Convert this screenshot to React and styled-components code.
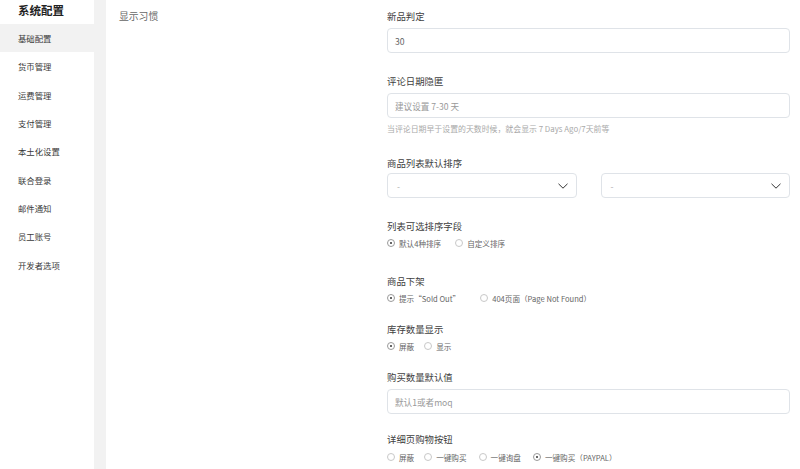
import React from "react";
import styled, { createGlobalStyle } from "styled-components";

const Global = createGlobalStyle`
  html, body { margin: 0; padding: 0; background: #f2f2f2; }
  body { font-family: "Noto Sans CJK SC", "Noto Sans", sans-serif; color: #333; }
  * { box-sizing: border-box; }
`;

const Page = styled.div`
  display: flex;
  width: 800px;
  height: 469px;
  overflow: hidden;
  background: #f2f2f2;
`;

const Sidebar = styled.nav`
  width: 94px;
  background: #fff;
  display: flex;
  flex-direction: column;
`;

const SideTitle = styled.div`
  height: 24px;
  padding: 2px 0 0 18px;
  line-height: 16px;
  font-size: 11.5px;
  font-weight: 700;
  color: #222;
`;

const SideItem = styled.div`
  height: 28.3px;
  display: flex;
  align-items: center;
  padding-left: 18px;
  font-size: 8.4px;
  color: #3a3a3a;
  background: ${(p) => (p.$active ? "#f2f2f2" : "#fff")};
`;

const Main = styled.main`
  margin-left: 12px;
  flex: 1;
  background: #fff;
  display: flex;
`;

const SectionTitle = styled.div`
  width: 281px;
  padding: 9px 0 0 13px;
  line-height: 14px;
  font-size: 9.8px;
  color: #666;
`;

const Form = styled.div`
  flex: 1;
  padding: 9px 10px 0 0;
  display: flex;
  flex-direction: column;
`;

const Field = styled.div`
  margin-top: ${(p) => p.$mt || 0}px;
  display: flex;
  flex-direction: column;
`;

const Label = styled.div`
  line-height: 14px;
  font-size: 9.4px;
  color: #404040;
  margin-bottom: ${(p) => p.$mb ?? 5}px;
`;

const Input = styled.div`
  height: 25px;
  border: 1px solid #dfe3e8;
  border-radius: 4px;
  display: flex;
  align-items: center;
  padding-left: 7px;
  font-size: 8.6px;
  color: ${(p) => (p.$value ? "#666" : "#999")};
`;

const Hint = styled.div`
  margin-top: 4px;
  line-height: 14px;
  font-size: 7.9px;
  color: #aaa;
`;

const SelectRow = styled.div`
  display: flex;
  gap: 24px;
`;

const Select = styled.div`
  flex: 1;
  height: 25px;
  border: 1px solid #dfe3e8;
  border-radius: 4px;
  display: flex;
  align-items: center;
  justify-content: space-between;
  padding: 0 8px 0 9px;
  font-size: 8.6px;
  color: #aaa;
`;

const RadioRow = styled.div`
  display: flex;
  align-items: center;
  height: 14px;
`;

const RadioOpt = styled.label`
  display: flex;
  align-items: center;
  gap: 4px;
  margin-right: ${(p) => p.$gap || 0}px;
  font-size: 7.6px;
  color: #666;
  white-space: nowrap;
`;

const Circle = styled.span`
  width: 8px;
  height: 8px;
  border-radius: 50%;
  border: 1px solid ${(p) => (p.$on ? "#9a9a9a" : "#c8c8c8")};
  display: inline-flex;
  align-items: center;
  justify-content: center;
  &::after {
    content: "";
    width: 2.6px;
    height: 2.6px;
    border-radius: 50%;
    background: ${(p) => (p.$on ? "#333" : "transparent")};
  }
`;

const Chevron = () => (
  <svg width="10" height="6" viewBox="0 0 10 6">
    <path d="M0.5 0.8 L5 5.2 L9.5 0.8" fill="none" stroke="#333" strokeWidth="1" />
  </svg>
);

const Radio = ({ on, gap, children }) => (
  <RadioOpt $gap={gap}>
    <Circle $on={on} />
    {children}
  </RadioOpt>
);

const menu = ["基础配置", "货币管理", "运费管理", "支付管理", "本土化设置", "联合登录", "邮件通知", "员工账号", "开发者选项"];

export default function App() {
  return (
    <>
      <Global />
      <Page>
        <Sidebar>
          <SideTitle>系统配置</SideTitle>
          {menu.map((m, i) => (
            <SideItem key={m} $active={i === 0}>{m}</SideItem>
          ))}
        </Sidebar>
        <Main>
          <SectionTitle>显示习惯</SectionTitle>
          <Form>
            <Field>
              <Label>新品判定</Label>
              <Input $value>30</Input>
            </Field>
            <Field $mt={21}>
              <Label>评论日期隐匿</Label>
              <Input>建议设置 7-30 天</Input>
              <Hint>当评论日期早于设置的天数时候，就会显示 7 Days Ago/7天前等</Hint>
            </Field>
            <Field $mt={20}>
              <Label $mb={3}>商品列表默认排序</Label>
              <SelectRow>
                <Select>- <Chevron /></Select>
                <Select>- <Chevron /></Select>
              </SelectRow>
            </Field>
            <Field $mt={21}>
              <Label $mb={3}>列表可选排序字段</Label>
              <RadioRow>
                <Radio on gap={14}>默认4种排序</Radio>
                <Radio>自定义排序</Radio>
              </RadioRow>
            </Field>
            <Field $mt={24}>
              <Label $mb={3}>商品下架</Label>
              <RadioRow>
                <Radio on gap={20}>提示“Sold Out”</Radio>
                <Radio>404页面（Page Not Found）</Radio>
              </RadioRow>
            </Field>
            <Field $mt={17}>
              <Label $mb={3}>库存数量显示</Label>
              <RadioRow>
                <Radio on gap={10}>屏蔽</Radio>
                <Radio>显示</Radio>
              </RadioRow>
            </Field>
            <Field $mt={17}>
              <Label>购买数量默认值</Label>
              <Input>默认1或者moq</Input>
            </Field>
            <Field $mt={18}>
              <Label $mb={4}>详细页购物按钮</Label>
              <RadioRow>
                <Radio gap={10}>屏蔽</Radio>
                <Radio gap={12}>一键购买</Radio>
                <Radio gap={12}>一键询盘</Radio>
                <Radio on>一键购买（PAYPAL）</Radio>
              </RadioRow>
            </Field>
          </Form>
        </Main>
      </Page>
    </>
  );
}
